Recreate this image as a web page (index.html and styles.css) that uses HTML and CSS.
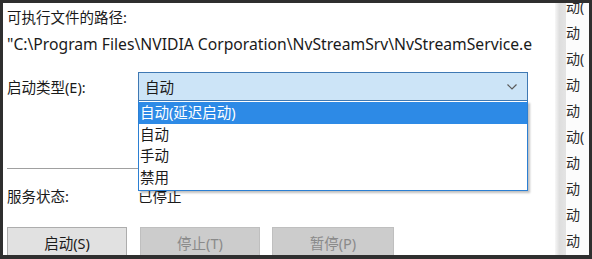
FILE: index.html
```html
<!DOCTYPE html>
<html lang="zh-CN">

<head>
    <meta charset="UTF-8">
    <title>服务属性</title>
    <link rel="stylesheet" href="styles.css">
</head>

<body>
    <div id="frame">
        <div id="dialog">
            <div class="line">可执行文件的路径:</div>
            <div class="line path">"C:\Program Files\NVIDIA Corporation\NvStreamSrv\NvStreamService.e</div>

            <div class="field-row">
                <div class="field-label">启动类型(E):</div>
                <div class="combo">
                    <span>自动</span>
                    <svg class="chevron" width="10" height="6" viewBox="0 0 10 6">
                        <path d="M0.5 0.5 L5 5 L9.5 0.5" fill="none" stroke="#5a5a5a" stroke-width="1.2" />
                    </svg>
                    <ul class="dropdown">
                        <li class="selected">自动(延迟启动)</li>
                        <li>自动</li>
                        <li>手动</li>
                        <li>禁用</li>
                    </ul>
                </div>
            </div>

            <div class="separator"></div>

            <div class="field-row status-row">
                <div class="field-label">服务状态:</div>
                <div>已停止</div>
            </div>

            <div class="buttons">
                <button class="btn">启动(S)</button>
                <button class="btn" disabled>停止(T)</button>
                <button class="btn wide" disabled>暂停(P)</button>
            </div>
        </div>

        <div class="splitter"></div>

        <div id="side-list">
            <div>动(</div>
            <div>动</div>
            <div>动(</div>
            <div>动</div>
            <div>动</div>
            <div>动(</div>
            <div>动</div>
            <div>动</div>
            <div>动</div>
            <div>动</div>
        </div>
    </div>
</body>
</html>
```

FILE: styles.css
```css
body {
    margin: 0;
    padding: 3px 3px 4px 3px;
    height: 259px;
    box-sizing: border-box;
    background-color: #2f2f2f;
    font-family: 'Noto Sans', 'Noto Sans CJK SC', sans-serif;
    font-size: 14.5px;
    color: #1a1a1a;
    overflow: hidden;
}

#frame {
    display: flex;
    height: 252px;
    overflow: hidden;
}

#dialog {
    position: relative;
    width: 548px;
    padding: 4px 0 0 4px;
    background-color: #fff;
}

.line {
    line-height: 20px;
    white-space: nowrap;
}

.path {
    margin-top: 7px;
    font-size: 15.7px;
}

.field-row {
    display: flex;
    align-items: center;
    margin-top: 18px;
}

.field-label {
    width: 131px;
    line-height: 20px;
}

.combo {
    position: relative;
    display: flex;
    align-items: center;
    justify-content: space-between;
    box-sizing: border-box;
    width: 390px;
    height: 29px;
    padding: 0 10px 0 6px;
    background-color: #cce4f7;
    border: 1px solid #3e78b3;
}

.chevron {
    margin-top: 1px;
}

.dropdown {
    position: absolute;
    top: 28px;
    left: -1px;
    width: 390px;
    box-sizing: border-box;
    margin: 0;
    padding: 1px 0 2px 0;
    list-style: none;
    background-color: #fff;
    border: 1px solid #2b7fd3;
    border-top: none;
    box-shadow: 2px 2px 2px rgba(0, 0, 0, 0.25);
    z-index: 2;
}

.dropdown li {
    height: 21.5px;
    line-height: 21px;
    padding-left: 1px;
}

.dropdown .selected {
    background-color: #2d8ae6;
    color: #fff;
}

.separator {
    width: 490px;
    height: 1px;
    margin-top: 67px;
    background-color: #a0a0a0;
}

.status-row {
    margin-top: 16px;
}

.buttons {
    display: flex;
    gap: 13px;
    margin-top: 21px;
}

.btn {
    width: 120px;
    height: 30px;
    padding: 0;
    font-family: inherit;
    font-size: 14.5px;
    color: #1a1a1a;
    background-color: #e1e1e1;
    border: 1px solid #adadad;
}

.btn:disabled {
    color: #8a8a8a;
    background-color: #cccccc;
    border-color: #bfbfbf;
}

.btn.wide {
    width: 122px;
    margin-left: -1px;
}

.splitter {
    width: 11px;
    background: linear-gradient(to right, #f7f7f7, #dedede 40%, #e4e4e4);
}

#side-list {
    flex: 1;
    margin-top: -9px;
    background-color: #fcfcfc;
    color: #2a2a2a;
    font-size: 14px;
    white-space: nowrap;
    overflow: hidden;
}

#side-list div {
    height: 26px;
    line-height: 26px;
}
```
